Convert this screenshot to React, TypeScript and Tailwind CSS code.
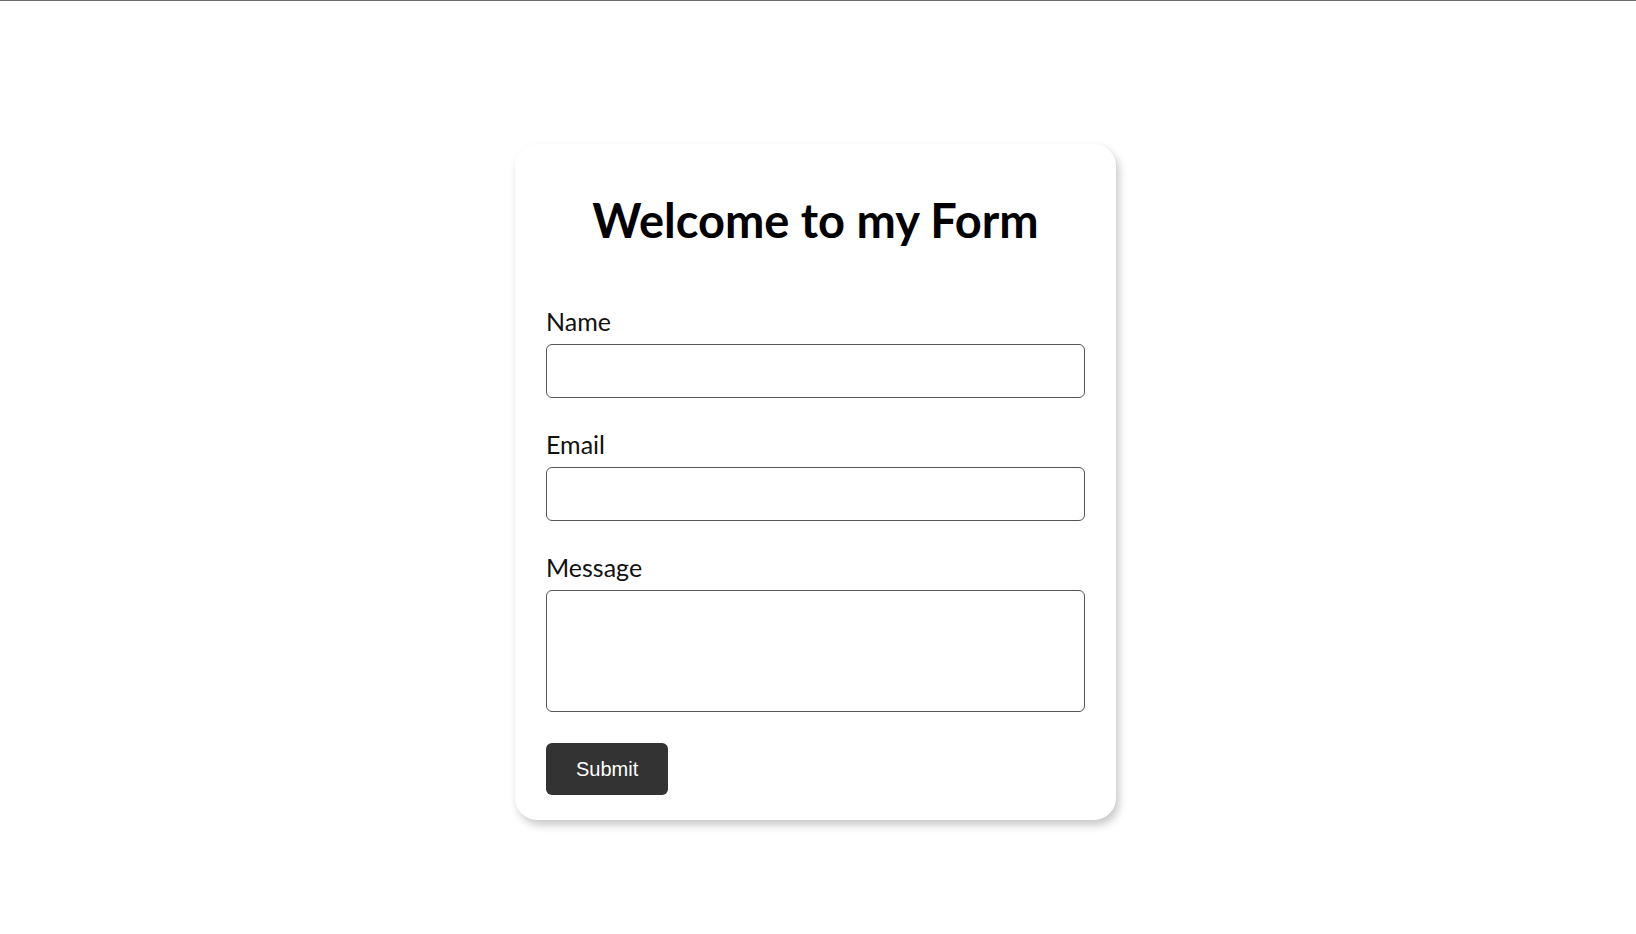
import { useState } from "react";

const Field = ({ label, children }: { label: string; children: React.ReactNode }) => (
    <div className="flex flex-col">
        <label className="text-[25px] leading-[30px] text-[#111] mb-2">{label}</label>
        {children}
    </div>
);

const App = () => {
    const [name, setName] = useState("");
    const [email, setEmail] = useState("");
    const [message, setMessage] = useState("");

    return (
        <div
            className="min-h-[934px] bg-white border-t border-[#6b6b70] flex justify-center pt-[143px] pr-[5px]"
            style={{ fontFamily: "Lato, 'Noto Sans', sans-serif" }}
        >
            <form
                onSubmit={(e) => e.preventDefault()}
                className="w-[601px] h-[676px] bg-white rounded-[22px] shadow-[3px_5px_9px_rgba(0,0,0,0.22)] pt-[46px] px-[31px] pb-[25px] flex flex-col"
            >
                <h1 className="text-[47px] leading-[60px] font-bold text-black text-center mb-[56px]">
                    Welcome to my Form
                </h1>

                <div className="flex flex-col gap-[31px]">
                    <Field label="Name">
                        <input
                            type="text"
                            value={name}
                            onChange={(e) => setName(e.target.value)}
                            className="h-[54px] border border-[#555] rounded-[6px] px-3 outline-none"
                        />
                    </Field>
                    <Field label="Email">
                        <input
                            type="email"
                            value={email}
                            onChange={(e) => setEmail(e.target.value)}
                            className="h-[54px] border border-[#555] rounded-[6px] px-3 outline-none"
                        />
                    </Field>
                    <Field label="Message">
                        <textarea
                            value={message}
                            onChange={(e) => setMessage(e.target.value)}
                            className="h-[122px] border border-[#555] rounded-[6px] px-3 py-2 resize-none outline-none"
                        />
                    </Field>
                    <div>
                        <button
                            type="submit"
                            className="h-[52px] px-[30px] bg-[#333] text-white rounded-[6px] text-[20px]"
                            style={{ fontFamily: "'Liberation Sans', Arial, sans-serif" }}
                        >
                            Submit
                        </button>
                    </div>
                </div>
            </form>
        </div>
    );
};

export default App;
